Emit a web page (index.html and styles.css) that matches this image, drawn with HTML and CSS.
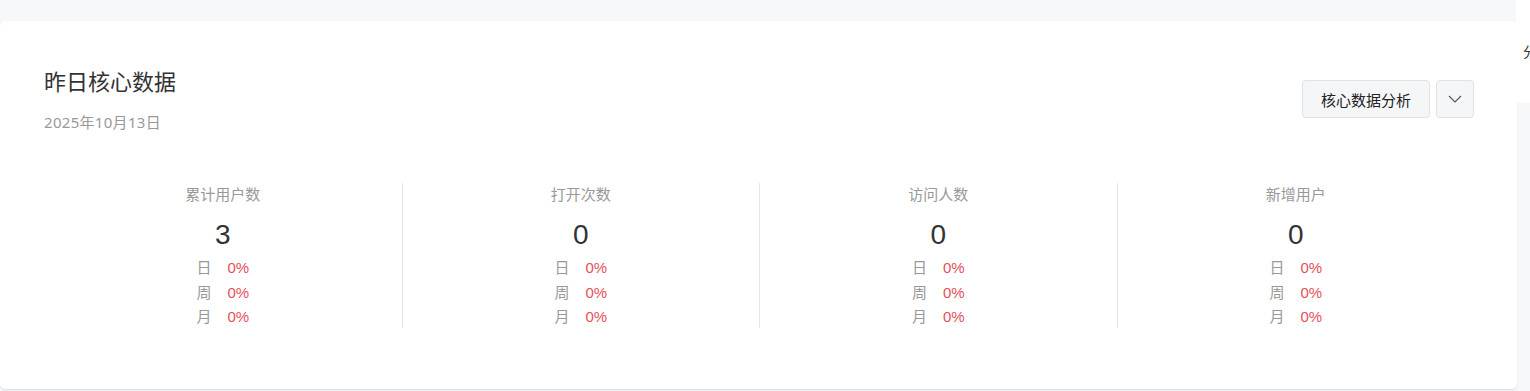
FILE: index.html
```html
<!DOCTYPE html>
<html lang="zh-CN">
<head>
<meta charset="utf-8">
<link rel="stylesheet" href="styles.css">
</head>
<body>
<div class="page">
  <div class="card">
    <div class="header">
      <div class="titles">
        <h1 class="title">昨日核心数据</h1>
        <div class="date">2025年10月13日</div>
      </div>
      <div class="actions">
        <button class="btn">核心数据分析</button>
        <button class="btn btn-icon" aria-label="更多">
          <svg width="14" height="8" viewBox="0 0 14 8"><path d="M1 1 L7 7 L13 1" fill="none" stroke="#555" stroke-width="1.1"/></svg>
        </button>
      </div>
    </div>
    <div class="stats">
      <div class="stat">
        <div class="stat-label">累计用户数</div>
        <div class="stat-value">3</div>
        <div class="row"><span class="row-k">日</span><span class="row-v">0%</span></div>
        <div class="row"><span class="row-k">周</span><span class="row-v">0%</span></div>
        <div class="row"><span class="row-k">月</span><span class="row-v">0%</span></div>
      </div>
      <div class="stat">
        <div class="stat-label">打开次数</div>
        <div class="stat-value">0</div>
        <div class="row"><span class="row-k">日</span><span class="row-v">0%</span></div>
        <div class="row"><span class="row-k">周</span><span class="row-v">0%</span></div>
        <div class="row"><span class="row-k">月</span><span class="row-v">0%</span></div>
      </div>
      <div class="stat">
        <div class="stat-label">访问人数</div>
        <div class="stat-value">0</div>
        <div class="row"><span class="row-k">日</span><span class="row-v">0%</span></div>
        <div class="row"><span class="row-k">周</span><span class="row-v">0%</span></div>
        <div class="row"><span class="row-k">月</span><span class="row-v">0%</span></div>
      </div>
      <div class="stat">
        <div class="stat-label">新增用户</div>
        <div class="stat-value">0</div>
        <div class="row"><span class="row-k">日</span><span class="row-v">0%</span></div>
        <div class="row"><span class="row-k">周</span><span class="row-v">0%</span></div>
        <div class="row"><span class="row-k">月</span><span class="row-v">0%</span></div>
      </div>
    </div>
  </div>
  <div class="side-panel"><span class="side-text">分析</span></div>
</div>
</body>
</html>
```
FILE: styles.css
```css
* { box-sizing: border-box; }
html, body {
  margin: 0;
  padding: 0;
  background: #f7f8fa;
  font-family: "Liberation Sans", "Noto Sans CJK SC", sans-serif;
}
.page {
  position: relative;
  width: 1530px;
  height: 391px;
  padding-top: 21px;
  overflow: hidden;
}
.card {
  width: 1517px;
  height: 368px;
  background: #fff;
  border-radius: 5px;
  box-shadow: 0 1px 2px rgba(0, 0, 0, 0.12);
  padding: 47px 43px 0 44px;
}
.header {
  display: flex;
  align-items: flex-start;
  justify-content: space-between;
  height: 64px;
}
.title {
  margin: 0;
  font-size: 22px;
  line-height: 30px;
  font-weight: normal;
  color: #333;
}
.date {
  margin-top: 14px;
  font-family: "Noto Sans", "Noto Sans CJK SC", sans-serif;
  font-size: 15px;
  line-height: 20px;
  letter-spacing: 0.3px;
  color: #999;
}
.actions {
  display: flex;
  gap: 6px;
  margin-top: 12px;
}
.btn {
  height: 38px;
  padding: 0 18px;
  background: #f5f6f8;
  border: 1px solid #dfe1e5;
  border-radius: 4px;
  font-family: inherit;
  font-size: 15px;
  color: #222;
}
.btn-icon {
  width: 38px;
  padding: 0;
  display: flex;
  align-items: center;
  justify-content: center;
}
.stats {
  display: grid;
  grid-template-columns: repeat(4, 1fr);
  margin-top: 51px;
}
.stat {
  padding-top: 2px;
  height: 145px;
  text-align: center;
}
.stat + .stat {
  border-left: 1px solid #e6e6e6;
}
.stat-label {
  font-size: 15px;
  line-height: 20px;
  color: #999;
}
.stat-value {
  margin-top: 11px;
  font-size: 28px;
  line-height: 38px;
  color: #333;
}
.row {
  display: flex;
  justify-content: center;
  gap: 16px;
  font-size: 15px;
  line-height: 24.5px;
}
.stat-value + .row { margin-top: 2px; }
.row-k { color: #999; }
.row-v { color: #e6505a; }
.side-panel {
  position: absolute;
  top: 0;
  left: 1516px;
  width: 14px;
  height: 103px;
  background: #fff;
  overflow: hidden;
}
.side-text {
  position: absolute;
  left: 7px;
  top: 42px;
  font-size: 14px;
  line-height: 20px;
  color: #333;
  white-space: nowrap;
}
```
